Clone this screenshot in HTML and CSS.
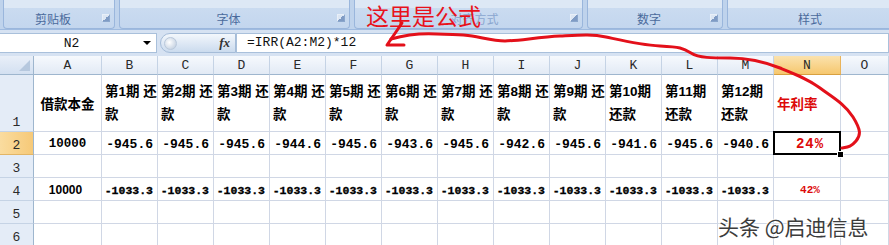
FILE: index.html
```html
<!DOCTYPE html>
<html lang="zh-CN">
  <head>
    <meta charset="UTF-8" />
    <title>IRR 年利率</title>
    <link rel="stylesheet" href="styles.css">
  </head>
  <body>
    <div class="ribbon">
      <div class="group g-clip"><span class="group-label">剪贴板</span><span class="launcher"></span></div>
      <div class="group g-font"><span class="group-label">字体</span><span class="launcher"></span></div>
      <div class="group g-align"><span class="group-label ghost">对齐方式</span><span class="launcher"></span></div>
      <div class="group g-num"><span class="group-label">数字</span><span class="launcher"></span></div>
      <div class="group g-style"><span class="group-label">样式</span></div>
    </div>

    <div class="formula-bar">
      <div class="name-box"><span class="name">N2</span><span class="caret"></span></div>
      <div class="fx-pill"><span class="knob"></span><span class="fx">fx</span></div>
      <div class="formula">=IRR(A2:M2)*12</div>
    </div>

    <div class="sheet">
      <div class="corner"><span class="corner-tri"></span></div>
      <div class="ch">A</div>
      <div class="ch">B</div>
      <div class="ch">C</div>
      <div class="ch">D</div>
      <div class="ch">E</div>
      <div class="ch">F</div>
      <div class="ch">G</div>
      <div class="ch">H</div>
      <div class="ch">I</div>
      <div class="ch">J</div>
      <div class="ch">K</div>
      <div class="ch">L</div>
      <div class="ch">M</div>
      <div class="ch active">N</div>
      <div class="ch">O</div>

      <div class="rh">1</div>
      <div class="c title">借款本金</div>
      <div class="c head"><span>第1期 还<br>款</span></div>
      <div class="c head"><span>第2期 还<br>款</span></div>
      <div class="c head"><span>第3期 还<br>款</span></div>
      <div class="c head"><span>第4期 还<br>款</span></div>
      <div class="c head"><span>第5期 还<br>款</span></div>
      <div class="c head"><span>第6期 还<br>款</span></div>
      <div class="c head"><span>第7期 还<br>款</span></div>
      <div class="c head"><span>第8期 还<br>款</span></div>
      <div class="c head"><span>第9期 还<br>款</span></div>
      <div class="c head"><span>第10期<br>还款</span></div>
      <div class="c head"><span>第11期<br>还款</span></div>
      <div class="c head"><span>第12期<br>还款</span></div>
      <div class="c rate-head">年利率</div>
      <div class="c"></div>

      <div class="rh active">2</div>
      <div class="c principal">10000</div>
      <div class="c num">-945.6</div>
      <div class="c num">-945.6</div>
      <div class="c num">-945.6</div>
      <div class="c num">-944.6</div>
      <div class="c num">-945.6</div>
      <div class="c num">-943.6</div>
      <div class="c num">-945.6</div>
      <div class="c num">-942.6</div>
      <div class="c num">-945.6</div>
      <div class="c num">-941.6</div>
      <div class="c num">-945.6</div>
      <div class="c num">-940.6</div>
      <div class="c rate selected">24%</div>
      <div class="c"></div>

      <div class="rh">3</div>
      <div class="c"></div><div class="c"></div><div class="c"></div><div class="c"></div><div class="c"></div>
      <div class="c"></div><div class="c"></div><div class="c"></div><div class="c"></div><div class="c"></div>
      <div class="c"></div><div class="c"></div><div class="c"></div><div class="c"></div><div class="c"></div>

      <div class="rh">4</div>
      <div class="c principal small">10000</div>
      <div class="c num small">-1033.3</div>
      <div class="c num small">-1033.3</div>
      <div class="c num small">-1033.3</div>
      <div class="c num small">-1033.3</div>
      <div class="c num small">-1033.3</div>
      <div class="c num small">-1033.3</div>
      <div class="c num small">-1033.3</div>
      <div class="c num small">-1033.3</div>
      <div class="c num small">-1033.3</div>
      <div class="c num small">-1033.3</div>
      <div class="c num small">-1033.3</div>
      <div class="c num small">-1033.3</div>
      <div class="c rate small">42%</div>
      <div class="c"></div>

      <div class="rh">5</div>
      <div class="c"></div><div class="c"></div><div class="c"></div><div class="c"></div><div class="c"></div>
      <div class="c"></div><div class="c"></div><div class="c"></div><div class="c"></div><div class="c"></div>
      <div class="c"></div><div class="c"></div><div class="c"></div><div class="c"></div><div class="c"></div>

      <div class="rh">6</div>
      <div class="c"></div><div class="c"></div><div class="c"></div><div class="c"></div><div class="c"></div>
      <div class="c"></div><div class="c"></div><div class="c"></div><div class="c"></div><div class="c"></div>
      <div class="c"></div><div class="c"></div><div class="c"></div><div class="c"></div><div class="c"></div>
    </div>

    <!-- hand drawn note on top of the screenshot -->
    <div class="note">这里是公式</div>
    <svg class="scribble" width="889" height="245" viewBox="0 0 889 245">
      <path d="M402,23 Q396,32 387,45 L404,45" />
      <path d="M391,39 C405,35 420,33 437,34 S460,34 472,36 S494,41 505,41 S540,37 560,36 S592,34 606,37 S640,45 660,46 S683,48 691,53 S712,58 730,58 S765,62 780,68 S808,79 820,88 S845,104 853,117 S861,135 856,141 S848,147 842,148" />
    </svg>
    <div class="watermark">头条 @启迪信息</div>
  </body>
</html>
```

FILE: styles.css
```css
body {
  margin: 0;
  width: 889px;
  height: 245px;
  overflow: hidden;
  position: relative;
  background-color: #fff;
  font-family: "Liberation Sans", "Noto Sans CJK SC", sans-serif;
}

/* ribbon */
.ribbon {
  display: flex;
  gap: 4px;
  padding-left: 3px;
  height: 29px;
  background-color: #bfd3ec;
}
.group {
  flex: none;
  box-sizing: border-box;
  height: 29px;
  display: flex;
  align-items: center;
  padding-top: 8px;
  border: 1px solid #9ab6dc;
  border-top: none;
  border-radius: 0 0 4px 4px;
  background: linear-gradient(#dde8f5 0, #dde8f5 8px, #cadbf0 8px, #c3d6ee 100%);
}
.g-clip { width: 112px; }
.g-font { width: 231px; }
.g-align { width: 229px; }
.g-num { width: 136px; }
.g-style { width: 166px; }
.group-label {
  flex: 1;
  text-align: center;
  font-size: 12px;
  color: #4a6a9c;
  font-family: "Noto Sans CJK SC", sans-serif;
}
.group-label.ghost {
  padding-left: 24px;
  color: #8aa6cf;
}
.launcher {
  width: 6px;
  height: 6px;
  margin-right: 4px;
  border: 1px solid #8aa6cc;
  border-top-color: #e8eff8;
  border-left-color: #e8eff8;
  background: linear-gradient(135deg, #dce6f3 50%, #7f9bc4 50%);
}

/* formula bar */
.formula-bar {
  display: flex;
  gap: 3px;
  height: 20px;
  padding: 3px 0;
  border-top: 1px solid #9fbbe0;
  background-color: #d6e2f2;
}
.name-box {
  width: 157px;
  box-sizing: border-box;
  display: flex;
  align-items: center;
  background-color: #fff;
  border: 1px solid #a9c0db;
  border-left: none;
}
.name {
  flex: 1;
  text-align: center;
  font-family: "Liberation Mono", monospace;
  font-size: 13px;
  color: #111;
}
.caret {
  margin-right: 5px;
  border-left: 4px solid transparent;
  border-right: 4px solid transparent;
  border-top: 4px solid #000;
}
.fx-pill {
  width: 76px;
  box-sizing: border-box;
  display: flex;
  align-items: center;
  justify-content: space-between;
  padding: 0 5px 0 3px;
  margin-right: -3px;
  border: 1px solid #a5bcd8;
  border-radius: 10px 0 0 10px;
  background: linear-gradient(#f3f7fc, #cbdbee);
}
.knob {
  width: 11px;
  height: 11px;
  border-radius: 50%;
  background: radial-gradient(circle at 40% 40%, #fff, #b6c6da);
  border: 1px solid #b9c8db;
}
.fx {
  font-family: "Liberation Serif", serif;
  font-style: italic;
  font-weight: bold;
  font-size: 13px;
  color: #333;
}
.formula {
  flex: 1;
  box-sizing: border-box;
  padding-left: 10px;
  line-height: 18px;
  background-color: #fff;
  border: 1px solid #a9c0db;
  font-family: "Liberation Mono", monospace;
  font-size: 13px;
  color: #111;
}

/* worksheet */
.sheet {
  display: grid;
  grid-template-columns: 34px 68px repeat(12, 56px) 67px 48px;
  grid-template-rows: 19px 57px 23px 23px 23px 23px 23px;
}
.sheet > div {
  box-sizing: border-box;
  display: flex;
  align-items: center;
  overflow: visible;
  white-space: nowrap;
}
.corner {
  justify-content: flex-end;
  align-items: flex-end !important;
  padding: 0 3px 3px 0;
  background: linear-gradient(#e9eff8, #d3e0f1);
  border-right: 1px solid #9eb6ce;
  border-bottom: 1px solid #9eb6ce;
}
.corner-tri {
  border-left: 11px solid transparent;
  border-bottom: 11px solid #b6c8de;
}
.ch {
  justify-content: center;
  font-family: "Liberation Mono", monospace;
  font-size: 13px;
  color: #2a2a2a;
  background: linear-gradient(#f6f9fd, #e2eaf5);
  border-right: 1px solid #c5d3e5;
  border-bottom: 1px solid #9eb6ce;
}
.ch.active {
  background: linear-gradient(#fbe2ad, #f6c76e);
  border-right-color: #e9b35a;
  border-bottom-color: #d8a040;
}
.rh {
  justify-content: center;
  align-items: flex-end !important;
  padding-bottom: 1px;
  font-family: "Liberation Mono", monospace;
  font-size: 13px;
  color: #2a2a2a;
  background-color: #e4ecf7;
  border-right: 1px solid #9eb6ce;
  border-bottom: 1px solid #c5d3e5;
}
.rh.active {
  background: linear-gradient(90deg, #fadc9f, #f6c978);
  border-bottom-color: #e2b566;
}
.c {
  border-right: 1px solid #d0d7e5;
  border-bottom: 1px solid #d0d7e5;
  color: #000;
}
.title {
  justify-content: center;
  font-weight: bold;
  font-size: 13.5px;
}
.head {
  padding-left: 3px;
  font-weight: bold;
  font-size: 13.5px;
  line-height: 23px;
}
.rate-head {
  padding-left: 3px;
  font-weight: bold;
  font-size: 13.5px;
  color: #dd0a0a;
}
.principal {
  justify-content: center;
  padding-top: 2px;
  font-family: "Liberation Mono", monospace;
  font-weight: bold;
  font-size: 12.5px;
}
.principal.small {
  font-family: "Liberation Sans", sans-serif;
  font-size: 12px;
  padding-right: 4px;
}
.num {
  justify-content: flex-end;
  padding-right: 4px;
  padding-top: 2px;
  font-family: "Liberation Mono", monospace;
  font-weight: bold;
  font-size: 13px;
}
.num.small {
  font-size: 11.5px;
  padding-right: 4px;
  -webkit-text-stroke: 0.3px #000;
}
.rate {
  justify-content: center;
  padding: 2px 0 0 6px;
  font-family: "Liberation Mono", monospace;
  font-weight: bold;
  font-size: 14px;
  letter-spacing: 1px;
  color: #dd0a0a;
}
.rate.small {
  font-size: 11px;
  letter-spacing: 0;
}
.selected {
  position: relative;
}
.selected::before {
  content: "";
  position: absolute;
  top: -1px;
  left: -1px;
  right: -1px;
  bottom: -1px;
  border: 2px solid #000;
}
.selected::after {
  content: "";
  position: absolute;
  right: -4px;
  bottom: -4px;
  width: 5px;
  height: 5px;
  background-color: #000;
  border: 1px solid #fff;
}

/* annotation layer */
.note {
  position: absolute;
  left: 366px;
  top: 4px;
  font-family: "Noto Sans CJK SC", sans-serif;
  font-size: 23px;
  line-height: 1;
  color: #e8121c;
}
.scribble {
  position: absolute;
  left: 0;
  top: 0;
  pointer-events: none;
}
.scribble path {
  fill: none;
  stroke: #e3101a;
  stroke-width: 3;
  stroke-linecap: round;
  stroke-linejoin: round;
}
.watermark {
  position: absolute;
  left: 718px;
  top: 211px;
  font-family: "Noto Sans CJK SC", sans-serif;
  font-size: 21px;
  color: #3c3c3c;
  text-shadow: 0 0 2px #fff, 0 0 2px #fff, 0 0 3px #fff;
}
```
